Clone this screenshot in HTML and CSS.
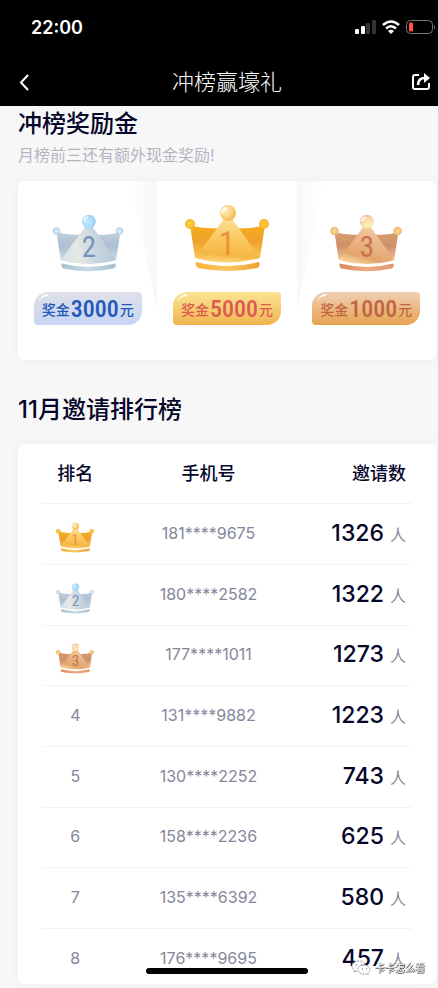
FILE: index.html
```html
<!DOCTYPE html>
<html lang="zh-CN">
<head>
<meta charset="utf-8">
<meta name="viewport" content="width=device-width, initial-scale=1">
<title>冲榜赢壕礼</title>
<link rel="stylesheet" href="styles.css">
</head>
<body>
<svg class="defs" aria-hidden="true">
  <defs>
    <linearGradient id="gold-side" x1="0" y1="0" x2="0" y2="1"><stop offset="0" stop-color="#f5ad1c"/><stop offset=".5" stop-color="#efa12d"/><stop offset="1" stop-color="#fbc45c"/></linearGradient>
    <linearGradient id="gold-front" x1=".6" y1="0" x2=".5" y2="1"><stop offset="0" stop-color="#fde2a0"/><stop offset=".5" stop-color="#f9c85e"/><stop offset=".85" stop-color="#f5b644"/><stop offset="1" stop-color="#fbd77c"/></linearGradient>
    <linearGradient id="gold-base" x1="0" y1="0" x2="1" y2="0"><stop offset="0" stop-color="#f7b23a"/><stop offset=".5" stop-color="#f9c75e"/><stop offset="1" stop-color="#ef9d30"/></linearGradient>
    <radialGradient id="gold-ball" cx=".35" cy=".35" r=".7"><stop offset="0" stop-color="#fff0c4"/><stop offset=".6" stop-color="#fbd27a"/><stop offset="1" stop-color="#f3b64a"/></radialGradient>
    <radialGradient id="gold-dot"><stop offset="0" stop-color="#fbd336"/><stop offset="1" stop-color="#f5b52f"/></radialGradient>
    <linearGradient id="silver-side" x1="0" y1="0" x2="0" y2="1"><stop offset="0" stop-color="#bfcfdd"/><stop offset=".5" stop-color="#adc0d1"/><stop offset="1" stop-color="#c8dcec"/></linearGradient>
    <linearGradient id="silver-front" x1="0" y1=".7" x2="1" y2=".6"><stop offset="0" stop-color="#d2e2ec"/><stop offset=".3" stop-color="#e6e8e3"/><stop offset=".6" stop-color="#cbd7e1"/><stop offset="1" stop-color="#b5c7d7"/></linearGradient>
    <linearGradient id="silver-base" x1="0" y1="0" x2="1" y2="0"><stop offset="0" stop-color="#a9c1d2"/><stop offset=".5" stop-color="#c6dbe7"/><stop offset="1" stop-color="#a8bdce"/></linearGradient>
    <radialGradient id="silver-ball" cx=".4" cy=".5" r=".65"><stop offset="0" stop-color="#c5e8ff"/><stop offset=".65" stop-color="#a9dbfd"/><stop offset="1" stop-color="#8dbbe4"/></radialGradient>
    <radialGradient id="silver-dot"><stop offset="0" stop-color="#e3f5fd"/><stop offset="1" stop-color="#b5d5eb"/></radialGradient>
    <linearGradient id="bronze-side" x1="0" y1="0" x2="0" y2="1"><stop offset="0" stop-color="#d89c70"/><stop offset=".5" stop-color="#ce9068"/><stop offset="1" stop-color="#edc09a"/></linearGradient>
    <linearGradient id="bronze-front" x1=".7" y1="0" x2=".3" y2="1"><stop offset="0" stop-color="#f4cfaa"/><stop offset=".5" stop-color="#e9b382"/><stop offset=".8" stop-color="#e4a56e"/><stop offset="1" stop-color="#f6d59a"/></linearGradient>
    <linearGradient id="bronze-base" x1="0" y1="0" x2="1" y2="0"><stop offset="0" stop-color="#dc8860"/><stop offset=".5" stop-color="#ecaa80"/><stop offset="1" stop-color="#e49570"/></linearGradient>
    <radialGradient id="bronze-ball" cx=".6" cy=".7" r=".7"><stop offset="0" stop-color="#fff0b0"/><stop offset=".6" stop-color="#fbdcae"/><stop offset="1" stop-color="#efb996"/></radialGradient>
    <radialGradient id="bronze-dot"><stop offset="0" stop-color="#fce08c"/><stop offset="1" stop-color="#efb377"/></radialGradient>
    <path id="side-left" d="M5 21Q18 25 34 24L26 40L10 54Z"/>
    <path id="side-right" d="M52 24Q68 25 80 21L75 54L60 42Z"/>
    <path id="front" d="M43 12Q46 12 48 16L75 54Q43 63 10 54L38 16Q40 12 43 12Z"/>
    <path id="base" d="M11 58Q43 66 74 58Q76 62 72 64Q43 70 13 64Q10 62 11 58Z"/>
    <symbol id="crown-gold" viewBox="0 0 84 68">
      <use href="#side-left" fill="url(#gold-side)"/><use href="#side-right" fill="url(#gold-side)"/>
      <use href="#front" fill="url(#gold-front)"/><use href="#base" fill="url(#gold-base)"/>
      <circle cx="5" cy="20" r="5" fill="url(#gold-dot)"/><circle cx="79" cy="20" r="5" fill="url(#gold-dot)"/>
      <circle cx="43" cy="9" r="8" fill="url(#gold-ball)"/><path d="M37 8Q38 5 41 4" fill="none" stroke="#fff" stroke-width="2" stroke-linecap="round"/>
      <text class="digit" x="42" y="51" fill="#ea9336">1</text>
    </symbol>
    <symbol id="crown-silver" viewBox="0 0 84 68">
      <use href="#side-left" fill="url(#silver-side)"/><use href="#side-right" fill="url(#silver-side)"/>
      <use href="#front" fill="url(#silver-front)"/><use href="#base" fill="url(#silver-base)"/>
      <circle cx="5" cy="20" r="4" fill="url(#silver-dot)" stroke="#b3d2e8"/><circle cx="79" cy="20" r="4" fill="url(#silver-dot)" stroke="#b3d2e8"/>
      <circle cx="43" cy="9" r="8" fill="url(#silver-ball)"/><path d="M38 8Q38 5 41 4" fill="none" stroke="#eefaff" stroke-width="2" stroke-linecap="round"/>
      <text class="digit" x="43" y="50" fill="#7594bb">2</text>
    </symbol>
    <symbol id="crown-bronze" viewBox="0 0 84 68">
      <use href="#side-left" fill="url(#bronze-side)"/><use href="#side-right" fill="url(#bronze-side)"/>
      <use href="#front" fill="url(#bronze-front)"/><use href="#base" fill="url(#bronze-base)"/>
      <circle cx="5" cy="20" r="5" fill="url(#bronze-dot)"/><circle cx="79" cy="20" r="5" fill="url(#bronze-dot)"/>
      <circle cx="43" cy="9" r="8" fill="url(#bronze-ball)"/><path d="M37 8Q38 5 41 4" fill="none" stroke="#fff" stroke-width="2" stroke-linecap="round"/>
      <text class="digit" x="43" y="50" fill="#c8714c">3</text>
    </symbol>
  </defs>
</svg>

<header class="top">
  <div class="status">
    <span class="clock">22:00</span>
    <div class="indicators">
      <svg width="21" height="14" viewBox="0 0 21 14" aria-hidden="true">
        <rect x="0" y="9" width="4" height="5" rx="1" fill="#fff"/><rect x="6" y="6" width="4" height="8" rx="1" fill="#fff"/><rect x="11" y="3" width="4" height="11" rx="1" fill="#333"/><rect x="17" y="0" width="4" height="14" rx="1" fill="#333"/>
      </svg>
      <svg width="18" height="14" viewBox="0 0 18 14" fill="none" stroke="#fff" stroke-width="2.6" aria-hidden="true">
        <path d="M1 5Q9 -2 17 5"/><path d="M4 8.500Q9 4 14 8.500"/><path d="M9 14L6 11Q9 8.500 12 11Z" fill="#fff" stroke="none"/>
      </svg>
      <svg width="30" height="14" viewBox="0 0 30 14" aria-hidden="true">
        <rect x=".5" y=".5" width="26" height="13" rx="4" fill="none" stroke="#777"/><rect x="3" y="2.500" width="4" height="9" rx="1" fill="#ff5340"/><path d="M28 4.500Q30 7 28 9.500Z" fill="#777"/>
      </svg>
    </div>
  </div>
  <nav class="nav">
    <button class="icon-button back" type="button" aria-label="返回">
      <svg width="12" height="18" viewBox="0 0 12 18" fill="none" stroke="#fff" stroke-width="2"><path d="M10 2L3 9.500L10 17"/></svg>
    </button>
    <h1 class="title">冲榜赢壕礼</h1>
    <button class="icon-button" type="button" aria-label="分享">
      <svg width="18" height="18" viewBox="0 0 18 18" fill="none" stroke="#fff" stroke-width="2"><path d="M7 2H3Q1 2 1 4V14Q1 16 3 16H15Q17 16 17 14V10"/><path d="M6 12Q6 5 13 5" stroke-width="2.500"/><path d="M12 0L18 5L12 10Z" fill="#fff" stroke="none"/></svg>
    </button>
  </nav>
</header>

<main class="content">
  <section>
    <h2 class="heading">冲榜奖励金</h2>
    <p class="note">月榜前三还有额外现金奖励!</p>
    <div class="card prizes">
      <div class="prize prize-silver">
        <svg class="crown" role="img" aria-label="第二名"><use href="#crown-silver"/></svg>
        <div class="award">奖金<strong>3000</strong>元</div>
      </div>
      <div class="prize prize-gold">
        <svg class="crown" role="img" aria-label="第一名"><use href="#crown-gold"/></svg>
        <div class="award">奖金<strong>5000</strong>元</div>
      </div>
      <div class="prize prize-bronze">
        <svg class="crown" role="img" aria-label="第三名"><use href="#crown-bronze"/></svg>
        <div class="award">奖金<strong>1000</strong>元</div>
      </div>
    </div>
  </section>

  <section class="ranking">
    <h2 class="heading">11月邀请排行榜</h2>
    <div class="card board">
      <table>
        <thead><tr><th scope="col">排名</th><th scope="col">手机号</th><th scope="col">邀请数</th></tr></thead>
        <tbody>
          <tr><td><svg class="medal" role="img" aria-label="第一名"><use href="#crown-gold"/></svg></td><td>181****9675</td><td><strong>1326</strong>人</td></tr>
          <tr><td><svg class="medal" role="img" aria-label="第二名"><use href="#crown-silver"/></svg></td><td>180****2582</td><td><strong>1322</strong>人</td></tr>
          <tr><td><svg class="medal" role="img" aria-label="第三名"><use href="#crown-bronze"/></svg></td><td>177****1011</td><td><strong>1273</strong>人</td></tr>
          <tr><td>4</td><td>131****9882</td><td><strong>1223</strong>人</td></tr>
          <tr><td>5</td><td>130****2252</td><td><strong>743</strong>人</td></tr>
          <tr><td>6</td><td>158****2236</td><td><strong>625</strong>人</td></tr>
          <tr><td>7</td><td>135****6392</td><td><strong>580</strong>人</td></tr>
          <tr><td>8</td><td>176****9695</td><td><strong>457</strong>人</td></tr>
        </tbody>
      </table>
    </div>
  </section>
</main>

<div class="home-bar"></div>
<div class="watermark">
  <svg width="20" height="16" viewBox="0 0 20 16" fill="#fff" stroke="#999" stroke-dasharray="2 1" aria-hidden="true"><path d="M8 1C4 1 1 3 1 6Q1 9 4 10L3 12L6 11Q13 12 14 6Q13 1 8 1Z"/><path d="M13 5C9 5 7 7 7 10C7 13 11 15 15 14L17 15V13Q19 12 19 10C19 7 16 5 13 5Z"/><path d="M5 5H6M10 5H11M11 9H12M15 9H16" stroke="#555" stroke-dasharray="none"/></svg>
  <span>卡卡怎么看</span>
</div>
</body>
</html>
```

FILE: styles.css
```css
* { box-sizing: border-box; }

body {
  margin: 0;
  background: #f7f7f7;
  color: #06062a;
  font-family: Inter, "Noto Sans CJK SC", sans-serif;
}

h1, h2, p { margin: 0; }

.defs { position: absolute; width: 0; height: 0; }

.digit {
  font-family: "Roboto Condensed", Roboto, sans-serif;
  font-size: 34px;
  text-anchor: middle;
}

.top { background: #000; color: #fff; }

.status {
  display: flex;
  align-items: center;
  justify-content: space-between;
  height: 54px;
  padding: 0 2px 0 31px;
}

.clock { font-size: 18px; font-weight: 600; }

.indicators { display: flex; gap: 6px; }
.indicators svg { display: block; }

.nav {
  display: flex;
  align-items: center;
  justify-content: space-between;
  height: 52px;
  padding: 4px 8px 0 18px;
}

.title { font-size: 22px; font-weight: 300; line-height: 32px; }

.icon-button {
  display: flex;
  padding: 0;
  border: 0;
  background: none;
}

.back { width: 24px; }

.content { padding: 1px 2px 4px 18px; }

.heading { font-size: 24px; font-weight: 500; line-height: 34px; }

.note {
  padding: 1px 0 13px;
  color: #b5b5c1;
  font-size: 16px;
  line-height: 26px;
}

.card {
  border-radius: 6px;
  background: #fff;
  box-shadow: 0 0 12px rgba(0, 0, 0, .04);
}

.prizes {
  display: grid;
  grid-template-columns: repeat(3, 1fr);
  padding-bottom: 35px;
}

.prize {
  position: relative;
  display: flex;
  flex-direction: column;
  align-items: center;
  justify-content: flex-end;
  gap: 20px;
  height: 144px;
}

.prize-silver::before,
.prize-bronze::before {
  content: "";
  position: absolute;
  top: 0;
  width: 28px;
  height: 130px;
}

.prize-silver::before {
  right: 0;
  background: linear-gradient(to right, #fff, #f6f8f8);
  clip-path: polygon(0 0, 100% 0, 100% 100%);
}

.prize-bronze::before {
  left: 0;
  background: linear-gradient(to left, #fff, #f6f8f8);
  clip-path: polygon(0 0, 100% 0, 0 100%);
}

.crown { width: 72px; height: 58px; }
.prize-gold .crown { width: 84px; height: 68px; }

.award {
  position: relative;
  display: flex;
  align-items: center;
  justify-content: center;
  gap: 1px;
  width: 108px;
  height: 33px;
  border-radius: 14px 4px;
  font-size: 14px;
  font-weight: 500;
}

.award::before {
  content: "";
  position: absolute;
  top: 2px;
  left: 5px;
  width: 9px;
  height: 8px;
  border-top: 2px solid #fff;
  border-radius: 9px 0 0;
}

.award strong {
  font-family: "Roboto Condensed", Roboto, sans-serif;
  font-size: 24px;
  font-weight: 500;
}

.prize-silver .award { background: linear-gradient(#dee1e9, #c7d4f4); color: #2158b8; }
.prize-gold .award { background: linear-gradient(#fbe594, #f0b44f); color: #dc5b50; }
.prize-bronze .award { background: linear-gradient(#f1cfb5, #e5a34f); color: #c06543; }

.ranking { padding-top: 33px; }

.board {
  margin-top: 17px;
  padding: 0 24px;
}

table {
  width: 100%;
  table-layout: fixed;
  border-collapse: collapse;
}

th, td {
  height: 61px;
  padding: 0;
  border-bottom: 1px solid #f3f3f5;
  text-align: center;
}

th { height: 59px; padding-top: 2px; font-size: 18px; font-weight: 500; line-height: 26px; }
td { padding-bottom: 2px; color: #86869a; font-size: 16px; line-height: 28px; }

th:first-child { width: 18%; }
th:nth-child(2) { width: 54%; }
th:last-child, td:last-child { padding-right: 6px; padding-bottom: 0; text-align: right; }

tr:nth-child(3n) td { height: 60px; }
tr:last-child td { height: 56px; padding-top: 5px; border-bottom: 0; }

td strong { margin-right: 6px; color: #06062a; font-size: 23px; font-weight: 500; }

.medal { display: block; width: 38px; height: 31px; margin: 9px auto 0; }

.home-bar {
  position: fixed;
  bottom: 14px;
  left: 146px;
  width: 162px;
  height: 6px;
  border-radius: 3px;
  background: #000;
}

.watermark {
  position: fixed;
  right: 13px;
  bottom: 12px;
  display: flex;
  align-items: center;
  gap: 4px;
  color: #fff;
  font-size: 10px;
  line-height: 16px;
  text-shadow: 1px 0 #555, 0 1px #555, 0 0 1px #555;
}
```
